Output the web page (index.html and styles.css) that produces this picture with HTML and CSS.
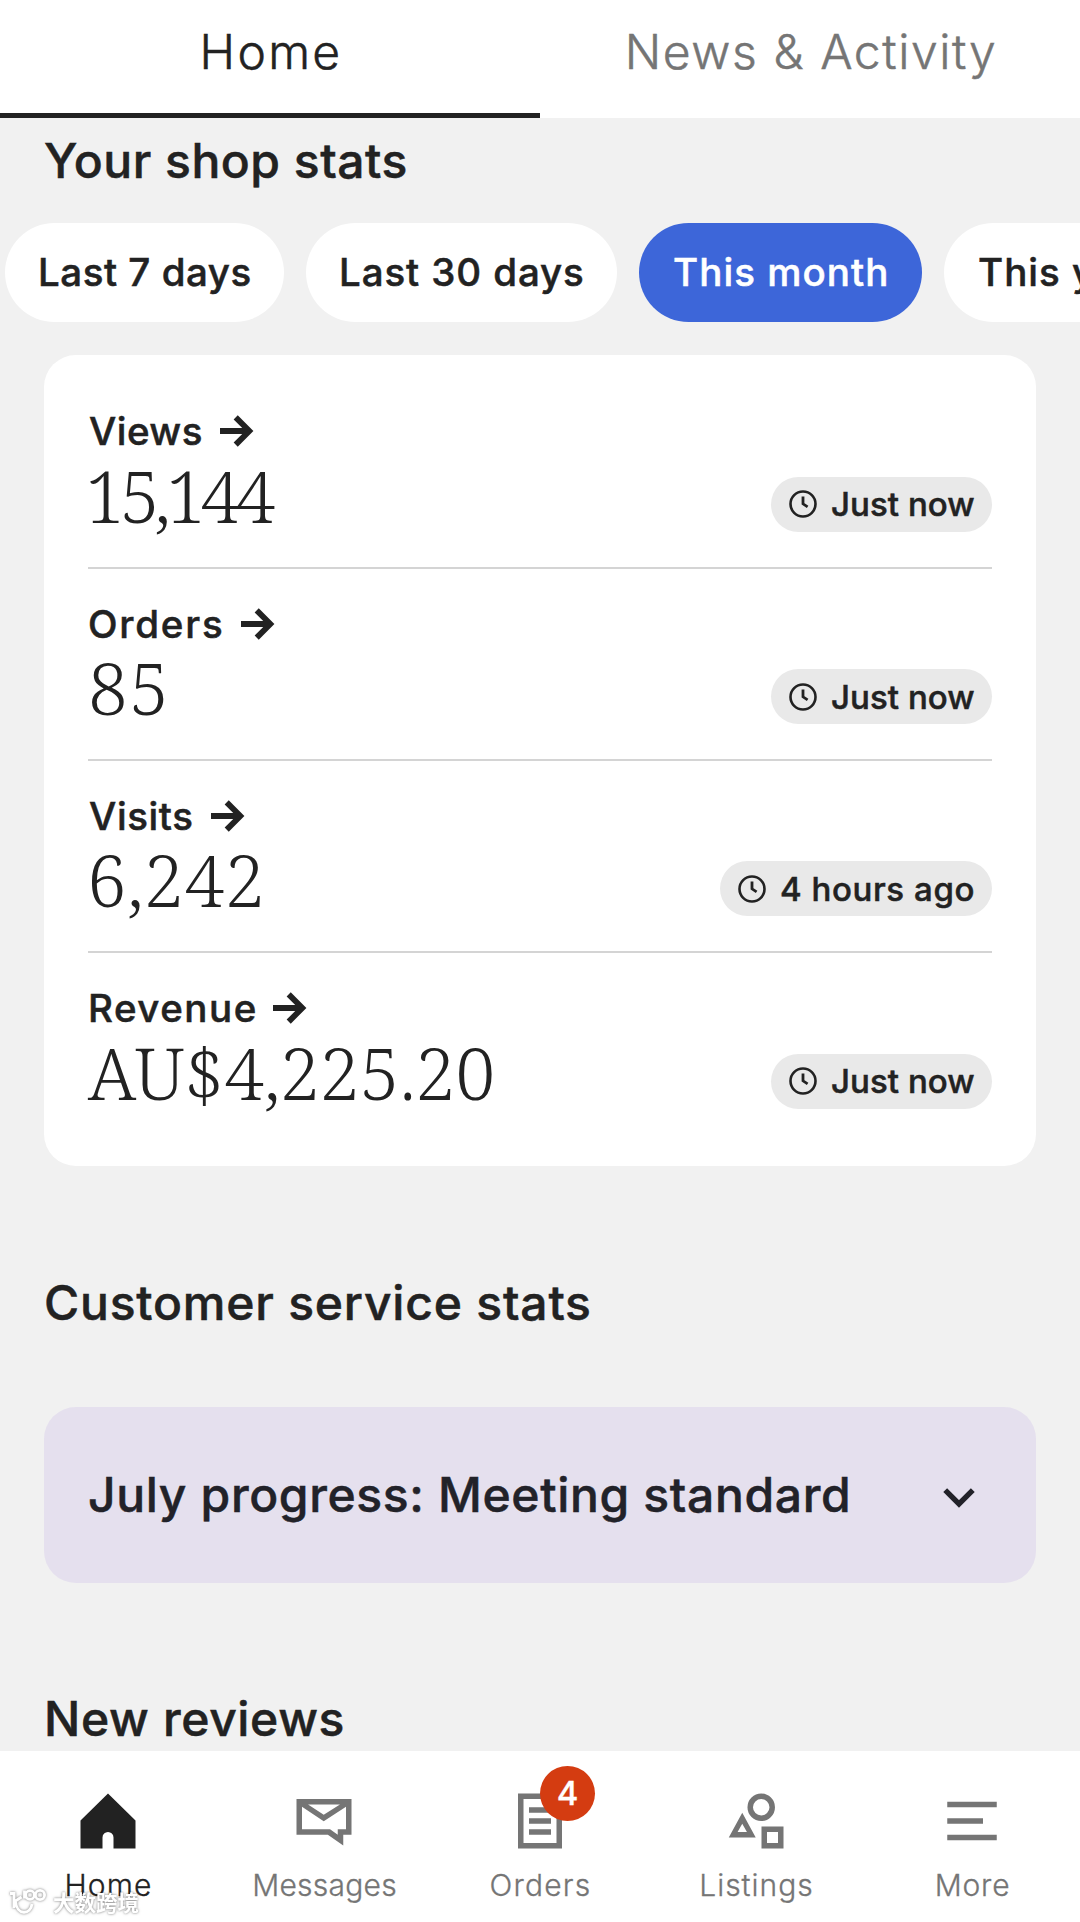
FILE: index.html
```html
<!DOCTYPE html>
<html lang="en">
<head>
<meta charset="utf-8">
<title>Shop stats</title>
<link rel="stylesheet" href="styles.css">
</head>
<body>
<svg class="defs" aria-hidden="true">
  <symbol id="arrow" viewBox="0 0 34 32"><path d="M0 16H29M15.7 2.4L29.3 16L15.7 29.6" fill="none" stroke="currentColor" stroke-width="5.8"/></symbol>
  <symbol id="clock" viewBox="0 0 28 28"><circle cx="14" cy="14" r="12.5" fill="none" stroke="currentColor" stroke-width="2.6"/><path d="M14 6.4V13.8L18.6 16.8" fill="none" stroke="currentColor" stroke-width="2.8"/></symbol>
</svg>
<div class="app">
  <header class="tabs">
    <a class="tab tab-active">Home</a>
    <a class="tab tab-news">News &amp; Activity</a>
  </header>

  <main class="content">
    <h2 class="title title-shop">Your shop stats</h2>
    <div class="chips">
      <span class="chip chip-week">Last 7 days</span>
      <span class="chip chip-thirty">Last 30 days</span>
      <span class="chip chip-month">This month</span>
      <span class="chip chip-year">This year</span>
    </div>

    <section class="card">
      <div class="stat">
        <div>
          <div class="label label-views">Views<svg class="arrow"><use href="#arrow"/></svg></div>
          <div class="value value-views">15,144</div>
        </div>
        <span class="pill"><svg class="clock"><use href="#clock"/></svg>Just now</span>
      </div>
      <div class="stat">
        <div>
          <div class="label label-orders">Orders<svg class="arrow"><use href="#arrow"/></svg></div>
          <div class="value value-orders">85</div>
        </div>
        <span class="pill"><svg class="clock"><use href="#clock"/></svg>Just now</span>
      </div>
      <div class="stat">
        <div>
          <div class="label label-visits">Visits<svg class="arrow"><use href="#arrow"/></svg></div>
          <div class="value value-visits">6,242</div>
        </div>
        <span class="pill pill-hours"><svg class="clock"><use href="#clock"/></svg>4 hours ago</span>
      </div>
      <div class="stat">
        <div>
          <div class="label label-revenue">Revenue<svg class="arrow"><use href="#arrow"/></svg></div>
          <div class="value value-revenue">AU$4,225.20</div>
        </div>
        <span class="pill"><svg class="clock"><use href="#clock"/></svg>Just now</span>
      </div>
    </section>

    <h2 class="title title-service">Customer service stats</h2>
    <section class="progress">
      <span>July progress: Meeting standard</span>
      <svg class="chevron" viewBox="0 0 32 20"><path d="M2.2 2.2L16 16L29.8 2.2" fill="none" stroke="currentColor" stroke-width="5.4"/></svg>
    </section>
    <h2 class="title title-reviews">New reviews</h2>
  </main>

  <nav class="nav">
    <a class="item item-active">
      <svg class="icon" viewBox="0 0 24 24"><path d="M12 2L22 11.8V22H14V18A2 2 0 0 0 10 18V22H2V11.8Z" fill="currentColor"/></svg>
      <span class="name-home">Home</span>
    </a>
    <a class="item">
      <svg class="icon" viewBox="0 0 24 24"><path d="M2 4H22V17H19V20.9L13.4 17H2ZM4 6.8V15H14.2L17 17V15H20V6.8L11.9 12.1ZM6.2 6L11.9 9.7L17.8 6Z" fill="currentColor" fill-rule="evenodd"/></svg>
      <span class="name-messages">Messages</span>
    </a>
    <a class="item">
      <svg class="icon" viewBox="0 0 24 24"><path d="M5 3H19V21H5ZM8 8H16M8 12H16M8 16H16" fill="none" stroke="currentColor" stroke-width="2"/></svg>
      <b class="badge">4</b>
      <span class="name-orders">Orders</span>
    </a>
    <a class="item">
      <svg class="icon" viewBox="0 0 24 24"><circle cx="13.9" cy="7" r="4" fill="none" stroke="currentColor" stroke-width="2"/><path d="M14 14H22V22H14ZM16 16V20H20V16ZM7 9L11.9 18H2.1ZM7 13L5.3 16H8.7Z" fill="currentColor" fill-rule="evenodd"/></svg>
      <span class="name-listings">Listings</span>
    </a>
    <a class="item">
      <svg class="icon" viewBox="0 0 24 24"><path d="M3 6H21M3 12H16M3 18H21" fill="none" stroke="currentColor" stroke-width="2"/></svg>
      <span class="name-more">More</span>
    </a>
  </nav>

  <div class="watermark">
    <svg class="mark" viewBox="0 0 40 28" fill="none" stroke="#fff" stroke-width="2.8"><path d="M1 5.5H5V20M15.5 2.5V10.5M12.5 9L6.5 13C7.5 28 22 27 23 16"/><circle cx="21" cy="7" r="4.4"/><circle cx="31" cy="7" r="4.6"/></svg>
    <span>大数跨境</span>
  </div>
</div>
</body>
</html>
```
FILE: styles.css
```css
* { box-sizing: border-box; }
body {
  margin: 0;
  background: #f1f1f1;
  color: #222;
  font-family: Inter, "Liberation Sans", sans-serif;
  font-weight: 500;
  -webkit-text-stroke: .5px currentColor;
}
.defs { display: none; }
svg { flex: none; overflow: visible; }
.app {
  position: relative;
  display: flex;
  flex-direction: column;
  width: 1080px;
  height: 1922px;
  overflow: hidden;
}

/* top tabs */
.tabs {
  display: grid;
  grid-template-columns: 1fr 1fr;
  flex: none;
  height: 118px;
  background: #fff;
}
.tab {
  font-size: 48px;
  font-weight: 300;
  line-height: 103px;
  text-align: center;
  color: #757575;
}
.tab-active {
  color: #222;
  border-bottom: 5.5px solid #222;
  letter-spacing: 2.3px;
  text-indent: 2px;
}
.tab-news { letter-spacing: 1.6px; text-indent: 2px; }

.content { flex: 1; min-height: 0; overflow: hidden; }
.title {
  margin: 0 44px;
  font-size: 48px;
  font-weight: 500;
  line-height: 60px;
}
.title-shop { margin-top: 13px; letter-spacing: .52px; }
.title-service { margin-top: 107px; letter-spacing: .8px; }
.title-reviews { margin-top: 106px; letter-spacing: .65px; }

/* period filter */
.chips {
  display: flex;
  gap: 22px;
  margin: 31.5px 0 33px 5px;
}
.chip {
  flex: none;
  height: 99px;
  padding-left: 33px;
  border-radius: 50px;
  background: #fff;
  font-size: 38.5px;
  line-height: 98px;
  white-space: nowrap;
}
.chip-week { width: 279px; letter-spacing: .52px; }
.chip-thirty { width: 311px; letter-spacing: .9px; }
.chip-month { width: 283px; padding-left: 34px; background: #3d66d9; color: #fff; letter-spacing: 1.05px; }
.chip-year { width: 250px; padding-left: 34px; letter-spacing: 1px; }

/* stats card */
.card {
  height: 811px;
  margin: 0 44px;
  padding: 22px 44px 0;
  border-radius: 32px;
  background: #fff;
}
.stat {
  display: flex;
  justify-content: space-between;
  align-items: flex-end;
  height: 192.3px;
  padding-bottom: 35px;
  border-bottom: 2.5px solid #d4d4d4;
}
.stat:last-child { border-bottom-color: transparent; }
.label {
  display: flex;
  align-items: center;
  gap: 17px;
  font-size: 38.5px;
  line-height: 46px;
}
.arrow { width: 34px; height: 32px; }
.label-views { padding-left: 1px; letter-spacing: .45px; }
.label-orders { letter-spacing: 1.8px; gap: 16px; }
.label-visits { padding-left: 1px; letter-spacing: .6px; }
.label-revenue { letter-spacing: 1.5px; gap: 15.5px; }
.value {
  margin-top: 5.5px;
  font-family: "Noto Serif", "Liberation Serif", serif;
  font-size: 71px;
  font-weight: 300;
  line-height: 72px;
  -webkit-text-stroke: 0;
}
.value-views { margin-left: -3px; letter-spacing: -4.8px; }
.value-orders { letter-spacing: 1.5px; }
.value-visits { margin-left: -1px; letter-spacing: .8px; }
.value-revenue { letter-spacing: .1px; }
.pill {
  display: flex;
  align-items: center;
  gap: 14px;
  width: 221px;
  height: 55px;
  padding-left: 18px;
  border-radius: 28px;
  background: #e9e9e9;
  font-size: 33px;
  letter-spacing: .05px;
  white-space: nowrap;
}
.pill-hours { width: 272px; letter-spacing: .58px; }
.clock { width: 28px; height: 28px; }

/* monthly progress */
.progress {
  display: flex;
  justify-content: space-between;
  align-items: center;
  height: 176px;
  margin: 74.5px 44px 0;
  padding: 0 61px 2px 44px;
  border-radius: 32px;
  background: #e5e0ee;
  color: #222229;
  font-size: 48px;
  letter-spacing: .65px;
}
.chevron { width: 32px; height: 20px; margin-top: 7px; }

/* bottom navigation */
.nav {
  display: grid;
  grid-template-columns: repeat(5, 1fr);
  flex: none;
  height: 171.5px;
  padding-top: 37.5px;
  background: #fff;
}
.item {
  position: relative;
  display: flex;
  flex-direction: column;
  align-items: center;
  gap: 10.5px;
  color: #757575;
  font-size: 30px;
  font-weight: 300;
  line-height: 40px;
  -webkit-text-stroke-width: .3px;
}
.item span { padding-left: 1px; }
.item-active { color: #222; }
.icon { width: 66px; height: 66px; }
.badge {
  position: absolute;
  top: -22.5px;
  left: 108px;
  width: 55px;
  height: 55px;
  border-radius: 50%;
  background: #d43c11;
  color: #fff;
  font-size: 33px;
  font-weight: 500;
  line-height: 55px;
  text-align: center;
}
.name-home { letter-spacing: 1.1px; }
.name-messages { letter-spacing: .24px; }
.name-orders { letter-spacing: 1.2px; }
.name-listings { letter-spacing: 1px; }
.name-more { letter-spacing: .8px; }

/* overlay credit */
.watermark {
  position: absolute;
  left: 9px;
  bottom: 6px;
  display: flex;
  align-items: center;
  gap: 4px;
  color: #fff;
  font-family: "Noto Sans CJK SC", sans-serif;
  font-size: 21.5px;
  font-weight: 700;
  line-height: 28px;
  -webkit-text-stroke: 0;
  filter: drop-shadow(0 0 1px rgba(0, 0, 0, .3)) drop-shadow(0 0 1.5px rgba(0, 0, 0, .25));
}
.mark { width: 40px; height: 28px; }
```
